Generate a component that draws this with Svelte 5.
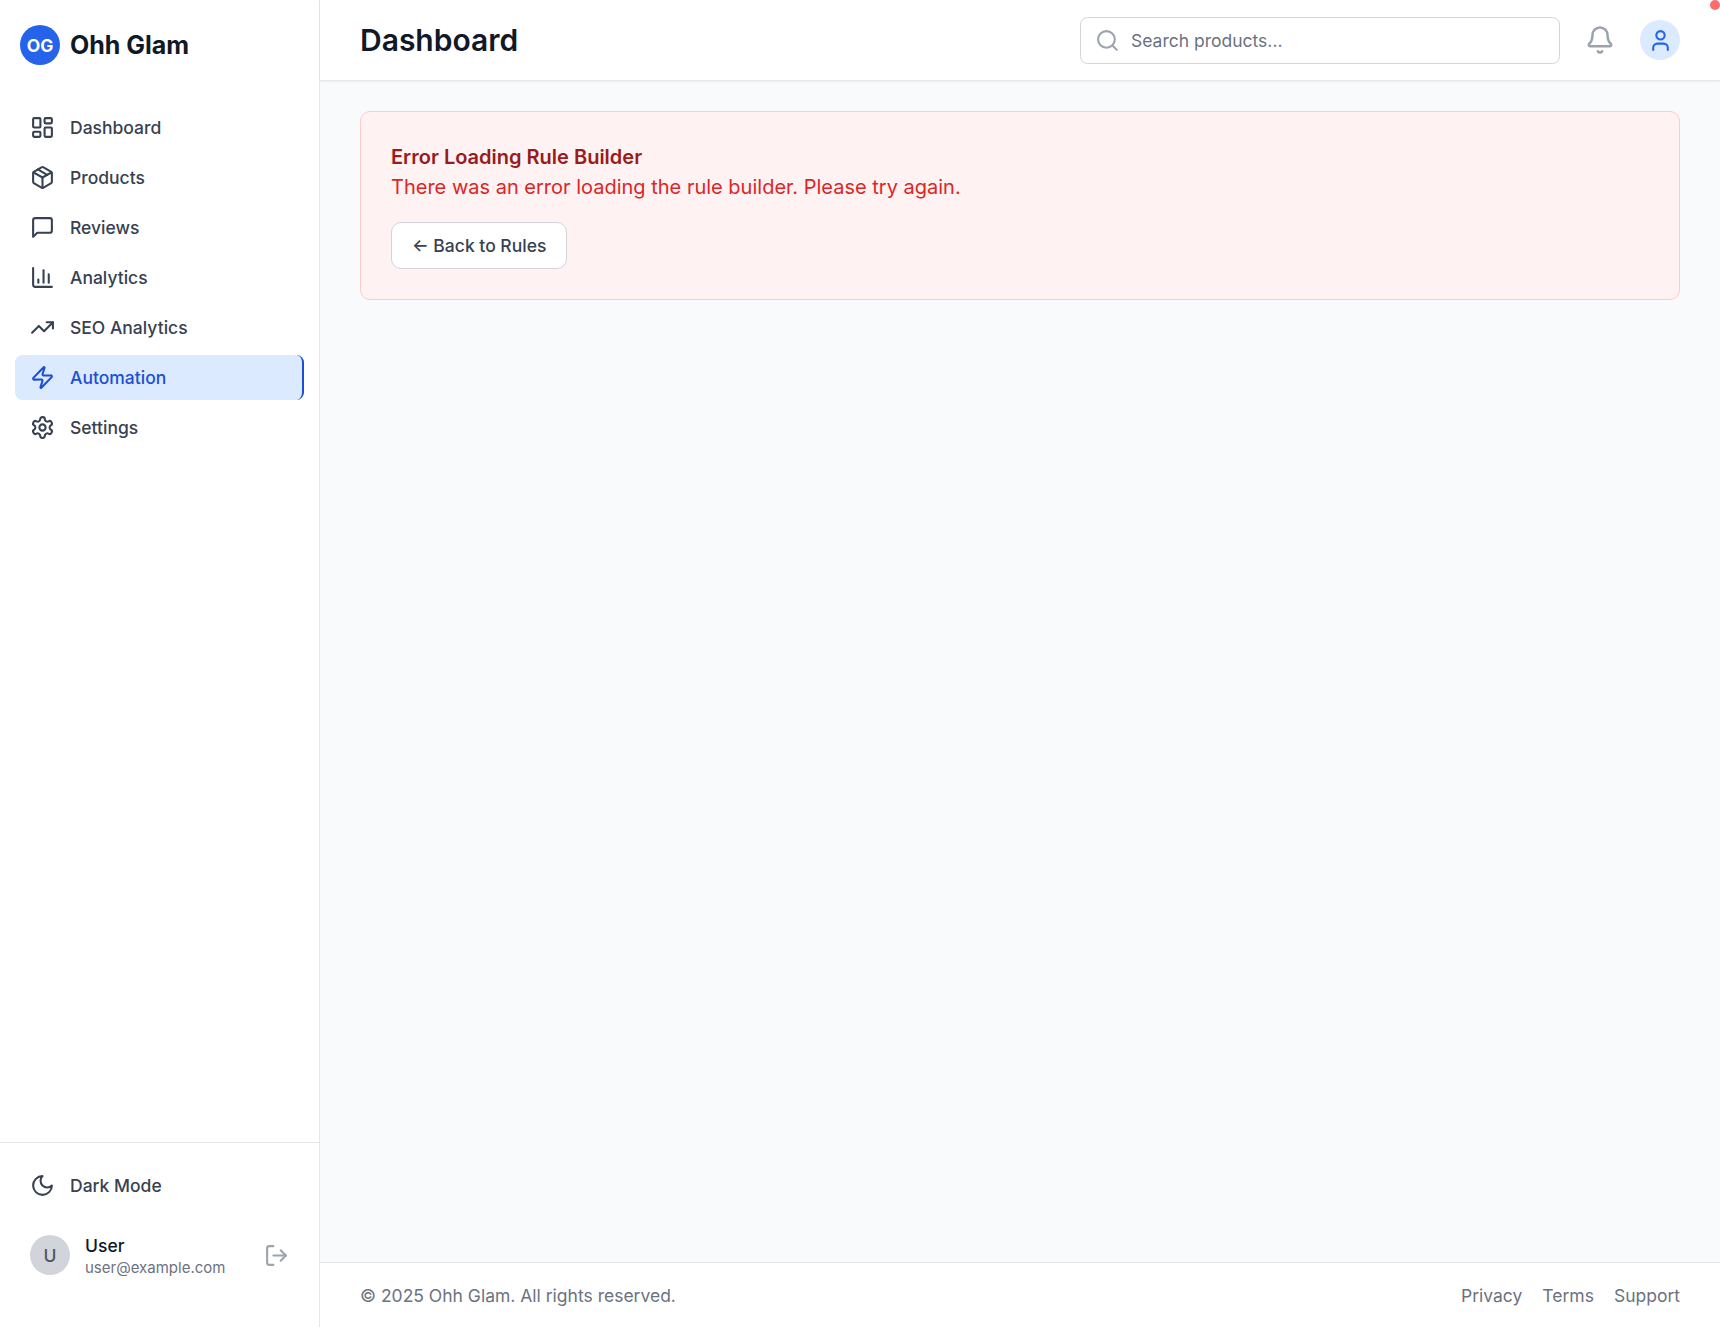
<script>
  const nav = [
    { label: 'Dashboard', icon: 'dashboard' },
    { label: 'Products', icon: 'package' },
    { label: 'Reviews', icon: 'message' },
    { label: 'Analytics', icon: 'chart' },
    { label: 'SEO Analytics', icon: 'trending' },
    { label: 'Automation', icon: 'zap', active: true },
    { label: 'Settings', icon: 'settings' }
  ];

  const icons = {
    dashboard: [
      'M4 3h5a1 1 0 0 1 1 1v7a1 1 0 0 1-1 1H4a1 1 0 0 1-1-1V4a1 1 0 0 1 1-1z',
      'M15 3h5a1 1 0 0 1 1 1v3a1 1 0 0 1-1 1h-5a1 1 0 0 1-1-1V4a1 1 0 0 1 1-1z',
      'M15 12h5a1 1 0 0 1 1 1v7a1 1 0 0 1-1 1h-5a1 1 0 0 1-1-1v-7a1 1 0 0 1 1-1z',
      'M4 16h5a1 1 0 0 1 1 1v3a1 1 0 0 1-1 1H4a1 1 0 0 1-1-1v-3a1 1 0 0 1 1-1z'
    ],
    package: [
      'M11 21.73a2 2 0 0 0 2 0l7-4A2 2 0 0 0 21 16V8a2 2 0 0 0-1-1.73l-7-4a2 2 0 0 0-2 0l-7 4A2 2 0 0 0 3 8v8a2 2 0 0 0 1 1.73z',
      'M12 22V12',
      'M3.29 7 12 12l8.71-5',
      'm7.5 4.27 9 5.15'
    ],
    message: ['M21 15a2 2 0 0 1-2 2H7l-4 4V5a2 2 0 0 1 2-2h14a2 2 0 0 1 2 2z'],
    chart: ['M3 3v16a2 2 0 0 0 2 2h16', 'M18 17V9', 'M13 17V5', 'M8 17v-3'],
    trending: ['M16 7h6v6', 'm22 7-8.5 8.5-5-5L2 17'],
    zap: [
      'M4 14a1 1 0 0 1-.78-1.63l9.9-10.2a.5.5 0 0 1 .86.46l-1.92 6.02A1 1 0 0 0 13 10h7a1 1 0 0 1 .78 1.63l-9.9 10.2a.5.5 0 0 1-.86-.46l1.92-6.02A1 1 0 0 0 11 14z'
    ],
    settings: [
      'M12.22 2h-.44a2 2 0 0 0-2 2v.18a2 2 0 0 1-1 1.73l-.43.25a2 2 0 0 1-2 0l-.15-.08a2 2 0 0 0-2.73.73l-.22.38a2 2 0 0 0 .73 2.73l.15.1a2 2 0 0 1 1 1.72v.51a2 2 0 0 1-1 1.74l-.15.09a2 2 0 0 0-.73 2.73l.22.38a2 2 0 0 0 2.73.73l.15-.08a2 2 0 0 1 2 0l.43.25a2 2 0 0 1 1 1.73V20a2 2 0 0 0 2 2h.44a2 2 0 0 0 2-2v-.18a2 2 0 0 1 1-1.73l.43-.25a2 2 0 0 1 2 0l.15.08a2 2 0 0 0 2.73-.73l.22-.39a2 2 0 0 0-.73-2.73l-.15-.08a2 2 0 0 1-1-1.74v-.5a2 2 0 0 1 1-1.74l.15-.09a2 2 0 0 0 .73-2.73l-.22-.38a2 2 0 0 0-2.73-.73l-.15.08a2 2 0 0 1-2 0l-.43-.25a2 2 0 0 1-1-1.73V4a2 2 0 0 0-2-2z',
      'M15 12a3 3 0 1 1-6 0 3 3 0 0 1 6 0z'
    ],
    moon: ['M12 3a6 6 0 0 0 9 9 9 9 0 1 1-9-9z'],
    logout: ['M9 21H5a2 2 0 0 1-2-2V5a2 2 0 0 1 2-2h4', 'm16 17 5-5-5-5', 'M21 12H9'],
    search: ['M19 11a8 8 0 1 1-16 0 8 8 0 0 1 16 0z', 'm21 21-4.3-4.3'],
    bell: [
      'M10.268 21a2 2 0 0 0 3.464 0',
      'M3.262 15.326A1 1 0 0 0 4 17h16a1 1 0 0 0 .74-1.673C19.41 13.956 18 12.499 18 8A6 6 0 0 0 6 8c0 4.499-1.411 5.956-2.738 7.326'
    ],
    user: ['M19 21v-2a4 4 0 0 0-4-4H9a4 4 0 0 0-4 4v2', 'M16 7a4 4 0 1 1-8 0 4 4 0 0 1 8 0z']
  };
</script>

{#snippet icon(name, large = false)}
  <svg class="icon" class:large viewBox="0 0 24 24" aria-hidden="true">
    {#each icons[name] as d}<path {d} />{/each}
  </svg>
{/snippet}

<div class="app">
  <aside>
    <div class="brand">
      <span class="logo">OG</span>
      <span class="name">Ohh Glam</span>
    </div>
    <nav>
      {#each nav as item}
        <a class="item" class:active={item.active} href="#top">
          {@render icon(item.icon)}<span>{item.label}</span>
        </a>
      {/each}
    </nav>
    <div class="bottom">
      <button class="item">{@render icon('moon')}<span>Dark Mode</span></button>
      <div class="profile">
        <span class="initial">U</span>
        <div class="who">
          <div class="username">User</div>
          <div class="email">user@example.com</div>
        </div>
        <button class="plain">{@render icon('logout')}</button>
      </div>
    </div>
  </aside>

  <div class="page">
    <header>
      <h1>Dashboard</h1>
      <div class="tools">
        <label class="search">
          {@render icon('search')}
          <input type="text" placeholder="Search products..." />
        </label>
        <button class="plain">{@render icon('bell', true)}</button>
        <button class="avatar">{@render icon('user')}</button>
      </div>
    </header>
    <main>
      <section class="error">
        <h3>Error Loading Rule Builder</h3>
        <p>There was an error loading the rule builder. Please try again.</p>
        <button class="back">← Back to Rules</button>
      </section>
    </main>
    <footer>
      <span>© 2025 Ohh Glam. All rights reserved.</span>
      <div class="links">
        <a href="#top">Privacy</a>
        <a href="#top">Terms</a>
        <a href="#top">Support</a>
      </div>
    </footer>
  </div>
  <span class="dot"></span>
</div>

<style>
  :global(body) {
    margin: 0;
  }
  .app,
  .app * {
    box-sizing: border-box;
  }
  .app {
    display: flex;
    position: relative;
    height: 100vh;
    overflow: hidden;
    background: #f9fafb;
    color: #111827;
    font: 400 17.5px/25px Inter, sans-serif;
  }
  button,
  input {
    font: inherit;
    color: inherit;
    border: 0;
    padding: 0;
    background: none;
  }
  a {
    color: inherit;
    text-decoration: none;
  }
  h1,
  h3,
  p {
    margin: 0;
  }
  .icon {
    display: block;
    flex: none;
    width: 25px;
    height: 25px;
    fill: none;
    stroke: currentColor;
    stroke-width: 2;
    stroke-linecap: round;
    stroke-linejoin: round;
  }
  .icon.large {
    width: 30px;
    height: 30px;
  }
  aside {
    display: flex;
    flex-direction: column;
    flex: none;
    width: 320px;
    background: #fff;
    border-right: 1px solid #e5e7eb;
  }
  .brand {
    display: flex;
    align-items: center;
    gap: 10px;
    padding: 25px 20px 0;
  }
  .logo {
    display: grid;
    place-items: center;
    width: 40px;
    height: 40px;
    border-radius: 50%;
    background: #2563eb;
    color: #fff;
    font-weight: 700;
  }
  .name {
    font-size: 25px;
    line-height: 35px;
    font-weight: 700;
  }
  nav {
    display: flex;
    flex: 1;
    flex-direction: column;
    gap: 5px;
    padding: 40px 15px 0;
  }
  .item {
    display: flex;
    align-items: center;
    gap: 15px;
    height: 45px;
    padding: 0 15px;
    border-radius: 7.5px;
    color: #374151;
    font-weight: 500;
  }
  .item.active {
    background: #dbeafe;
    color: #1d4ed8;
    border-right: 2px solid #1d4ed8;
  }
  .bottom {
    height: 185px;
    padding: 20px 15px;
    border-top: 1px solid #e5e7eb;
  }
  .profile {
    display: flex;
    align-items: center;
    gap: 15px;
    height: 45px;
    margin-top: 24.5px;
    padding: 0 15px;
  }
  .initial {
    display: grid;
    place-items: center;
    width: 40px;
    height: 40px;
    border-radius: 50%;
    background: #d1d5db;
    color: #4b5563;
    font-weight: 500;
  }
  .who {
    flex: 1;
  }
  .username {
    font-weight: 500;
  }
  .email {
    font-size: 15px;
    line-height: 20px;
    color: #6b7280;
  }
  .plain {
    color: #9ca3af;
  }
  .page {
    display: flex;
    flex: 1;
    flex-direction: column;
    min-width: 0;
  }
  header {
    display: flex;
    align-items: center;
    justify-content: space-between;
    height: 81px;
    padding: 0 40px;
    background: #fff;
    border-bottom: 1px solid #e5e7eb;
    box-shadow: 0 1px 2px rgba(0, 0, 0, 0.05);
  }
  h1 {
    font-size: 30px;
    line-height: 40px;
    font-weight: 600;
  }
  .tools {
    display: flex;
    align-items: center;
    gap: 25px;
  }
  .search {
    display: flex;
    align-items: center;
    gap: 11px;
    width: 480px;
    height: 47px;
    padding: 0 14px;
    border: 1px solid #d1d5db;
    border-radius: 7.5px;
    color: #9ca3af;
  }
  .search input {
    flex: 1;
    min-width: 0;
    outline: 0;
  }
  .search input::placeholder {
    color: #6b7280;
    opacity: 1;
  }
  .avatar {
    display: grid;
    place-items: center;
    width: 40px;
    height: 40px;
    border-radius: 50%;
    background: #dbeafe;
    color: #2563eb;
  }
  main {
    flex: 1;
    padding: 30px 40px;
  }
  .error {
    padding: 30px;
    background: #fef2f2;
    border: 1px solid #fecaca;
    border-radius: 10px;
  }
  h3,
  p {
    font-size: 20px;
    line-height: 30px;
  }
  h3 {
    color: #991b1b;
    font-weight: 600;
  }
  p {
    color: #dc2626;
  }
  .back {
    height: 47px;
    margin-top: 20px;
    padding: 0 20px;
    border: 1px solid #d1d5db;
    border-radius: 10px;
    background: #fff;
    color: #374151;
    font-weight: 500;
  }
  footer {
    display: flex;
    align-items: center;
    justify-content: space-between;
    height: 65px;
    padding: 0 40px;
    background: #fff;
    border-top: 1px solid #e5e7eb;
    color: #6b7280;
  }
  .links {
    display: flex;
    gap: 20px;
  }
  .dot {
    position: absolute;
    top: 0;
    right: 0;
    width: 10px;
    height: 10px;
    border-radius: 50%;
    background: #ff6b6b;
  }
</style>
